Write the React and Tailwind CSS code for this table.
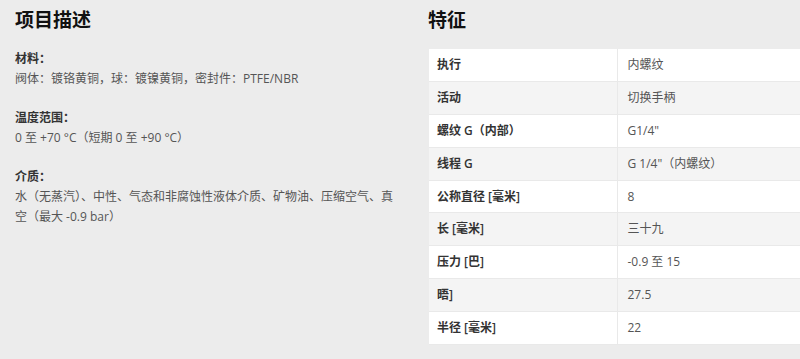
const desc = [
  { label: '材料：', text: '阀体：镀铬黄铜，球：镀镍黄铜，密封件：PTFE/NBR' },
  { label: '温度范围：', text: '0 至 +70 °C（短期 0 至 +90 °C）' },
  { label: '介质：', text: '水（无蒸汽）、中性、气态和非腐蚀性液体介质、矿物油、压缩空气、真空（最大 -0.9 bar）' },
];

const specs = [
  ['执行', '内螺纹'],
  ['活动', '切换手柄'],
  ['螺纹 G（内部）', 'G1/4"'],
  ['线程 G', 'G 1/4"（内螺纹）'],
  ['公称直径 [毫米]', '8'],
  ['长 [毫米]', '三十九'],
  ['压力 [巴]', '-0.9 至 15'],
  ['晤]', '27.5'],
  ['半径 [毫米]', '22'],
];

export default function App() {
  return (
    <div
      className="w-[800px] h-[359px] overflow-hidden bg-[#ececec] flex"
      style={{ fontFamily: '"Open Sans", "Noto Sans CJK SC", sans-serif' }}
    >
      {/* Project description */}
      <section className="w-[385px] shrink-0 ml-[15px] pt-[7px]">
        <h2 className="text-[19px] leading-[26px] font-bold text-[#111]">项目描述</h2>
        <div className="mt-[16px] flex flex-col gap-[19px]">
          {desc.map((d) => (
            <div key={d.label} className="text-[12px] leading-[20px]">
              <p className="font-bold text-[#333]">{d.label}</p>
              <p className="text-[#555]">{d.text}</p>
            </div>
          ))}
        </div>
      </section>

      {/* Features */}
      <section className="w-[376px] shrink-0 ml-[28px] pt-[7px]">
        <h2 className="text-[19px] leading-[26px] font-bold text-[#111]">特征</h2>
        <table className="mt-[16px] w-[376px] ml-[1px] border-collapse text-[12px]">
          <tbody>
            {specs.map(([k, v], i) => (
              <tr key={k} className={i % 2 ? 'bg-[#f4f4f4]' : 'bg-white'}>
                <td className="w-1/2 h-[32.8px] py-0 px-[8px] border-r border-b border-[#e9e9e9] font-semibold text-[#333]">{k}</td>
                <td className="w-1/2 h-[32.8px] py-0 px-[10px] border-b border-[#e9e9e9] text-[#555]">{v}</td>
              </tr>
            ))}
          </tbody>
        </table>
      </section>
    </div>
  );
}
